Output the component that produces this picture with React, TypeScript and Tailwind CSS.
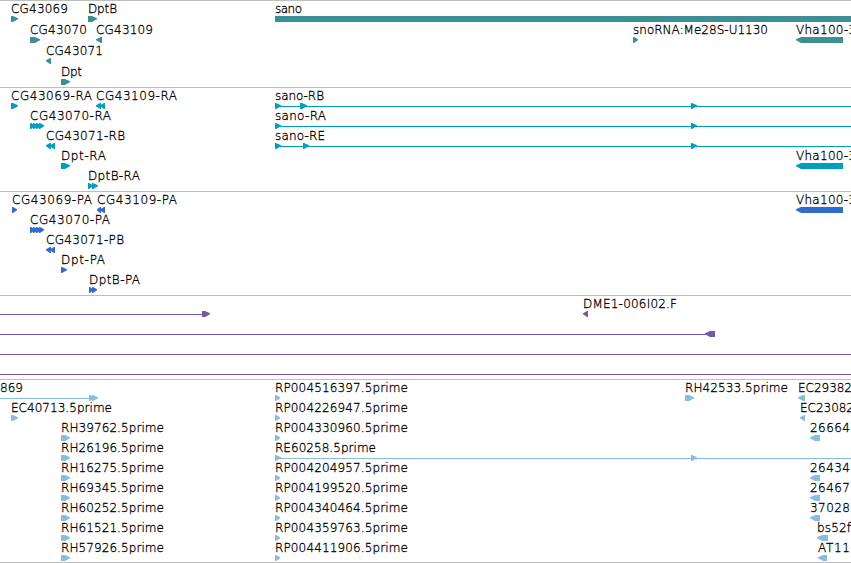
import { clsx } from 'clsx';

type Shape = { kind: 'right' | 'left' | 'block' | 'line'; x: number; w: number };

type Feature = {
  label?: string;
  x?: number;
  width?: number;
  shapes: Shape[];
};

type Lane = Feature[];

const WIDTH = 851;

const r = (x: number, w = 6): Shape => ({ kind: 'right', x, w });
const l = (x: number, w = 6): Shape => ({ kind: 'left', x, w });
const line = (x: number, end: number): Shape => ({ kind: 'line', x, w: end - x });
const block = (x: number, end: number): Shape => ({ kind: 'block', x, w: end - x });

const f = (label: string, x: number, width: number, ...shapes: Shape[]): Feature => ({
  label,
  x,
  width,
  shapes,
});

const vha = () => f('Vha100-3', 796, 60, l(796, 47));

const genes: Lane[] = [
  [f('CG43069', 11, 57, r(11, 7)), f('DptB', 88, 29, r(88, 9)), f('sano', 275, 27, block(275, WIDTH))],
  [
    f('CG43070', 30, 57, r(30, 10)),
    f('CG43109', 96, 57, l(96)),
    f('snoRNA:Me28S-U1130', 633, 135, r(633, 5)),
    vha(),
  ],
  [f('CG43071', 46, 57, l(46, 5))],
  [f('Dpt', 61, 21, r(61, 9))],
];

const transcripts: Lane[] = [
  [
    f('CG43069-RA', 11, 81, r(11, 7)),
    f('CG43109-RA', 96, 81, l(96, 5), l(100, 5)),
    f('sano-RB', 275, 49, line(275, WIDTH), r(275), r(300, 7), r(691)),
  ],
  [
    f('CG43070-RA', 30, 81, r(30, 5), r(33, 5), r(36, 5), r(39, 5)),
    f('sano-RA', 275, 51, line(275, WIDTH), r(275), r(691)),
  ],
  [
    f('CG43071-RB', 46, 79, l(46, 5), l(50, 5)),
    f('sano-RE', 275, 50, line(275, WIDTH), r(275), r(303), r(691)),
  ],
  [f('Dpt-RA', 61, 45, r(61, 9)), vha()],
  [f('DptB-RA', 88, 52, r(88, 5), r(92))],
];

const proteins: Lane[] = [
  [f('CG43069-PA', 12, 80, r(12, 5)), f('CG43109-PA', 97, 80, l(97, 4), l(100, 5)), vha()],
  [f('CG43070-PA', 30, 80, r(30, 5), r(33, 5), r(36, 5), r(39, 5))],
  [f('CG43071-PB', 46, 78, l(46, 5), l(50, 5))],
  [f('Dpt-PA', 61, 44, r(61))],
  [f('DptB-PA', 89, 51, r(89, 4), r(92, 5))],
];

const clones: Lane[] = [
  [{ shapes: [line(0, 203), r(202, 8)] }, f('DME1-006I02.F', 583, 94, l(583, 5))],
  [{ shapes: [line(0, 707), l(705, 10)] }],
  [{ shapes: [line(0, WIDTH)] }],
  [{ shapes: [line(0, WIDTH)] }],
];

const rh = (label: string) => f(label, 61, 103, r(61, 9));
const rp = (label: string) => f(label, 275, 133, r(275, 5));

const ests: Lane[] = [
  [
    f('869', 0, 23, line(0, 90), r(89, 5), r(92)),
    rp('RP004516397.5prime'),
    f('RH42533.5prime', 685, 103, r(685, 9)),
    f('EC29382', 798, 54, l(798, 7)),
  ],
  [f('EC40713.5prime', 11, 101, r(11, 7)), rp('RP004226947.5prime'), f('EC23082', 800, 54, l(800, 5))],
  [rh('RH39762.5prime'), rp('RP004330960.5prime'), f('26664', 810, 40, l(810, 10))],
  [rh('RH26196.5prime'), f('RE60258.5prime', 275, 101, line(275, WIDTH), r(275), r(691))],
  [rh('RH16275.5prime'), rp('RP004204957.5prime'), f('26434', 810, 40, l(810, 10))],
  [rh('RH69345.5prime'), rp('RP004199520.5prime'), f('26467', 810, 40, l(810, 10))],
  [rh('RH60252.5prime'), rp('RP004340464.5prime'), f('37028', 810, 40, l(810, 10))],
  [rh('RH61521.5prime'), rp('RP004359763.5prime'), f('bs52f', 817, 34, l(817, 11))],
  [rh('RH57926.5prime'), rp('RP004411906.5prime'), f('AT11', 818, 32, l(818, 9))],
];

function Glyph({ kind, x, w }: Shape) {
  if (kind === 'line') {
    return <rect x={x} y={18} width={w} height={1} />;
  }
  if (kind === 'block') {
    return <rect x={x} y={15} width={w} height={6} />;
  }
  const head = Math.min(w, 6);
  const points =
    kind === 'right'
      ? `${x},15 ${x + w - head + 1},15 ${x + w},17.3 ${x + w},18.3 ${x + w - head + 1},21 ${x},21`
      : `${x + w},15 ${x + head - 1},15 ${x},17.3 ${x},18.3 ${x + head - 1},21 ${x + w},21`;
  return <polygon points={points} />;
}

function LaneRow({ features, tall }: { features: Lane; tall?: boolean }) {
  return (
    <svg className={clsx('block w-full shrink-0 overflow-visible', tall ? 'h-[21px]' : 'h-5')}>
      {features.map(({ label, x, width, shapes }, i) => (
        <g key={i}>
          {shapes.map((shape, j) => (
            <Glyph key={j} {...shape} />
          ))}
          {label && (
            <text x={x} y={12} textLength={width} className="fill-black stroke-black stroke-[0.3px]">
              {label}
            </text>
          )}
        </g>
      ))}
    </svg>
  );
}

function Track({ lanes, className, tall }: { lanes: Lane[]; className: string; tall?: boolean }) {
  return (
    <section className={clsx('flex flex-col border-t border-[#bebebe]', className)}>
      {lanes.map((features, i) => (
        <LaneRow key={i} features={features} tall={tall} />
      ))}
    </section>
  );
}

function App() {
  return (
    <main className="flex h-[563px] w-[851px] flex-col overflow-hidden border-b border-[#bebebe] bg-white font-['DejaVu_Sans_Light','DejaVu_Sans',sans-serif] text-[12px] font-extralight antialiased">
      <Track lanes={genes} className="fill-[#3d8f96] pb-0.5" tall />
      <Track lanes={transcripts} className="fill-[#009fc0] pb-[3px]" />
      <Track lanes={proteins} className="fill-[#306bd0] pb-[3px]" />
      <Track lanes={clones} className="fill-[#7658a8] pb-[3px]" />
      <Track lanes={ests} className="fill-[#86bde0] pb-0.5" />
    </main>
  );
}

export default App;
